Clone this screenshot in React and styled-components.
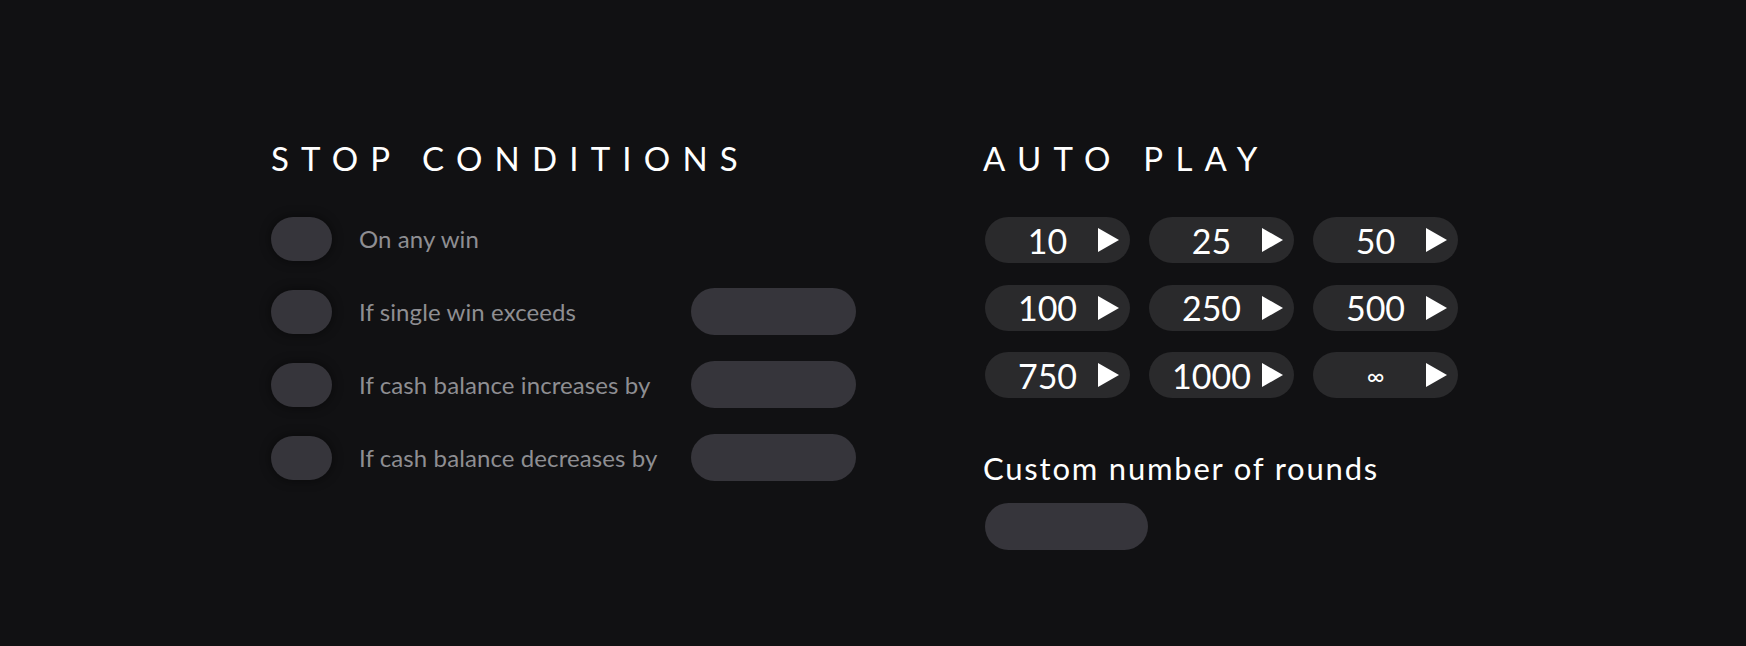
import React from 'react';
import styled, {createGlobalStyle} from 'styled-components';


const GlobalStyle = createGlobalStyle`
    html, body {
        margin: 0;
        padding: 0;
        background: #111113;
    }
    * {
        box-sizing: border-box;
    }
`
const Page = styled.div`
    display: flex;
    flex-direction: row;
    width: 1746px;
    height: 646px;
    padding: 138px 0 0 271px;
    background: #111113;
    font-family: Lato, "Noto Sans", sans-serif;
`
const Column = styled.div`
    display: flex;
    flex-direction: column;
    width: ${p => p.width || 'auto'};
`
const Title = styled.h2`
    margin: 0;
    font-size: 33px;
    line-height: 40px;
    font-weight: 400;
    letter-spacing: 12.2px;
    color: #fff;
    text-transform: uppercase;
`
const ConditionList = styled.div`
    display: flex;
    flex-direction: column;
    gap: 26px;
    margin-top: 37px;
`
const ConditionRow = styled.div`
    display: grid;
    grid-template-columns: 61px 305px 165px;
    column-gap: 27px;
    align-items: center;
    height: 47px;
`
const Toggle = styled.button`
    width: 61px;
    height: 44px;
    border: none;
    border-radius: 22px;
    background: #36353b;
    box-shadow: 0 0 10px 2px rgba(0, 0, 0, 0.35);
    padding: 0;
    cursor: pointer;
`
const Label = styled.span`
    font-size: 24px;
    letter-spacing: 0.1px;
    color: #8e8e92;
    white-space: nowrap;
`
const Input = styled.input`
    width: ${p => p.width || '165px'};
    height: 47px;
    border: none;
    border-radius: 24px;
    background: #36353b;
    outline: none;
    padding: 0 20px;
    color: #fff;
    font-family: inherit;
    font-size: 22px;
`
const RoundsGrid = styled.div`
    display: grid;
    grid-template-columns: repeat(3, 145px);
    column-gap: 19px;
    row-gap: 21.5px;
    margin: 39px 0 0 2px;
`
const RoundButton = styled.button`
    display: flex;
    align-items: center;
    height: 46px;
    padding: 0 11px 0 20px;
    border: none;
    border-radius: 23px;
    background: #2a2a2c;
    color: #fff;
    font-family: inherit;
    cursor: pointer;
`
const RoundValue = styled.span`
    width: 85px;
    margin-right: 8px;
    text-align: center;
    font-size: ${p => p.small ? '24px' : '34px'};
    white-space: nowrap;
`
const SubTitle = styled.div`
    margin: 52px 0 17px;
    font-size: 31px;
    line-height: 36px;
    letter-spacing: 1.8px;
    color: #fff;
`
const CustomInput = styled(Input)`
    margin-left: 2px;
`

const conditions = [
    {label: 'On any win', input: false},
    {label: 'If single win exceeds', input: true},
    {label: 'If cash balance increases by', input: true},
    {label: 'If cash balance decreases by', input: true},
]

const rounds = ['10', '25', '50', '100', '250', '500', '750', '1000', '∞']

function PlayIcon() {
    return (
        <svg width="21" height="24" viewBox="0 0 21 24">
            <polygon points="0,0 21,12 0,24" fill="#fff" />
        </svg>
    )
}

function App() {
    return(
        <>
            <GlobalStyle />
            <Page>
                <Column width="712px">
                    <Title>Stop Conditions</Title>
                    <ConditionList>
                        {conditions.map(c => (
                            <ConditionRow key={c.label}>
                                <Toggle />
                                <Label>{c.label}</Label>
                                {c.input && <Input />}
                            </ConditionRow>
                        ))}
                    </ConditionList>
                </Column>
                <Column>
                    <Title>Auto Play</Title>
                    <RoundsGrid>
                        {rounds.map(r => (
                            <RoundButton key={r}>
                                <RoundValue small={r === '∞'}>{r}</RoundValue>
                                <PlayIcon />
                            </RoundButton>
                        ))}
                    </RoundsGrid>
                    <SubTitle>Custom number of rounds</SubTitle>
                    <CustomInput width="163px" />
                </Column>
            </Page>
        </>
    )
}

export default App;
